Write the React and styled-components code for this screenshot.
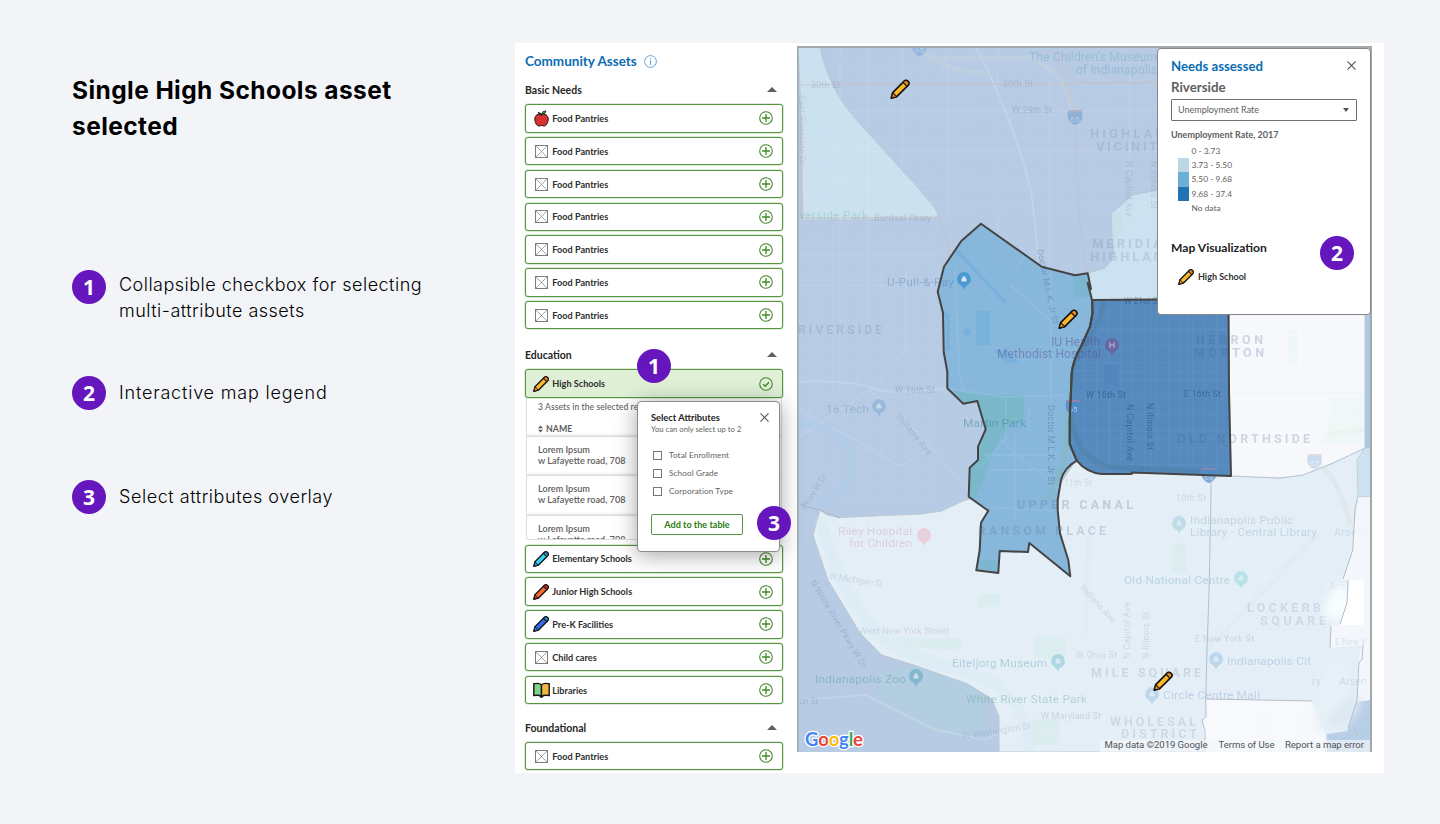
import React from "react";
import styled, { createGlobalStyle } from "styled-components";

const GlobalStyle = createGlobalStyle`
  * { box-sizing: border-box; }
  body { margin: 0; background: #f2f4f8; font-family: Lato, "Open Sans", sans-serif; }
  h1, h2, h3, p, ol, ul { margin: 0; padding: 0; font-weight: inherit; }
  ol, ul { list-style: none; }
  svg { display: block; flex: none; }
`;

const Page = styled.main`
  display: flex;
  width: 1440px;
  height: 824px;
  overflow: hidden;
  background: #f2f4f8;
`;

const Intro = styled.section`
  width: 443px;
  margin-left: 72px;
  padding-top: 72px;
  flex: none;
  font-family: Inter, sans-serif;
  color: #000;
`;

const Title = styled.h1`
  font-size: 24.5px;
  line-height: 36px;
  font-weight: 700;
  letter-spacing: 0.42px;
  width: 360px;
  height: 198px;
`;

const Notes = styled.ol`
  display: flex;
  flex-direction: column;
`;

const Note = styled.li`
  display: flex;
  gap: 13px;
  height: ${(p) => p.$height}px;
  font-size: 18px;
  line-height: 26px;
  font-weight: 300;
  letter-spacing: ${(p) => p.$spacing}px;
  p { padding-top: ${(p) => p.$top}px; width: 330px; }
`;

const Badge = styled.span`
  display: flex;
  align-items: center;
  justify-content: center;
  flex: none;
  width: 34px;
  height: 34px;
  border-radius: 50%;
  background: #6517bd;
  color: #fff;
  font: 700 21px/34px "Open Sans", sans-serif;
  letter-spacing: 0;
`;

const FloatingBadge = styled(Badge)`
  position: absolute;
  left: ${(p) => p.$x}px;
  top: ${(p) => p.$y}px;
  z-index: 3;
`;

const AppPanel = styled.section`
  position: relative;
  display: flex;
  gap: 14px;
  width: 869px;
  height: 730px;
  margin-top: 43px;
  padding: 3px 12px 0 10px;
  background: #fff;
  overflow: hidden;
`;

const Sidebar = styled.aside`
  position: relative;
  width: 258px;
  flex: none;
`;

const SidebarTitle = styled.h2`
  display: flex;
  align-items: center;
  gap: 7px;
  height: 31px;
  padding-bottom: 1px;
  color: #0a6db4;
  font-size: 13.5px;
  font-weight: 700;
  white-space: nowrap;
`;

const GroupHeader = styled.h3`
  display: flex;
  align-items: center;
  justify-content: space-between;
  height: ${(p) => p.$height || 27}px;
  padding: 0 6px 2px 0;
  font-size: 10.5px;
  font-weight: 700;
  color: #262626;
`;

const Caret = styled.i`
  border: 5px solid transparent;
  border-top: 0;
  border-bottom: 5.5px solid #616161;
`;

const AssetList = styled.ul`
  display: flex;
  flex-direction: column;
  gap: 4.5px;
  margin-bottom: ${(p) => p.$after || 0}px;
`;

const AssetRow = styled.li`
  display: flex;
  align-items: center;
  height: 28.3px;
  padding: 0 9px 0 7px;
  border: 1.3px solid #579641;
  border-radius: 3px;
  background: ${(p) => (p.$selected ? "#dff0d7" : "#fff")};
  box-shadow: 0 0 0 0.5px #57964166;
  font-size: 9.15px;
  font-weight: 700;
  color: #2e2e2e;
  span { flex: 1; padding-left: 3px; }
`;

const IconSlot = styled.i`
  display: flex;
  justify-content: center;
  width: 16.3px;
`;

const Details = styled.div`
  height: 142.5px;
  margin: -4.5px 1px 0;
  border: 1px solid #ddd;
  border-top: 0;
  border-radius: 0 0 3px 3px;
  overflow: hidden;
  color: #606060;
  font-size: 9.15px;
  font-weight: 600;
`;

const DetailsSummary = styled.p`
  height: 21px;
  padding: 3px 0 0 11px;
  font-size: 8.5px;
  line-height: 12px;
  letter-spacing: 0.1px;
  font-weight: 500;
  white-space: nowrap;
`;

const DetailsHead = styled.div`
  display: flex;
  align-items: center;
  gap: 3px;
  height: 17px;
  padding: 3px 0 0 11px;
  font-size: 8.8px;
  font-weight: 700;
`;

const DetailsItem = styled.div`
  height: 39.8px;
  padding: 7px 11px 0;
  border-top: 1px solid #dcdcdc;
  box-shadow: 0 -1px 2px rgba(0, 0, 0, 0.12);
  line-height: 11px;
`;

const Popover = styled.div`
  position: absolute;
  left: 122px;
  top: 358px;
  z-index: 2;
  width: 143px;
  height: 151px;
  padding: 9px 10px 0 13px;
  border: 1px solid #8b8b8b;
  border-radius: 4px;
  background: #fff;
  box-shadow: 0 3px 22px rgba(0, 0, 0, 0.36);
  color: #5f5f5f;
`;

const PopoverHead = styled.div`
  display: flex;
  justify-content: space-between;
  align-items: center;
  height: 12px;
  font-size: 9.3px;
  font-weight: 700;
  color: #222;
`;

const Hint = styled.p`
  height: 23px;
  font-size: 7.7px;
  line-height: 12px;
  white-space: nowrap;
`;

const CheckLabel = styled.label`
  display: flex;
  align-items: center;
  gap: 7px;
  height: 18px;
  padding-left: 2px;
  font-size: 8.2px;
  white-space: nowrap;
  letter-spacing: 0.1px;
`;

const Box = styled.i`
  width: 9px;
  height: 9px;
  border: 1px solid #777;
`;

const AddButton = styled.button`
  display: block;
  width: 92px;
  height: 21px;
  margin-top: 14px;
  padding: 0;
  border: 1.3px solid #579641;
  border-radius: 2px;
  background: #fff;
  color: #2c7a10;
  font: 700 9.1px/18px Lato, sans-serif;
`;

const MapFrame = styled.div`
  position: relative;
  width: 575px;
  height: 706px;
  flex: none;
`;

const Legend = styled.aside`
  position: absolute;
  left: 360px;
  top: 2px;
  width: 214px;
  height: 267px;
  padding: 8px 14px 0 13px;
  border: 1px solid #858585;
  border-radius: 4px;
  background: #fff;
  color: #606060;
`;

const LegendHead = styled.div`
  display: flex;
  align-items: center;
  justify-content: space-between;
  height: 17px;
  color: #0a6db4;
  font-size: 13.2px;
  font-weight: 700;
`;

const Region = styled.h3`
  height: 25px;
  font-size: 13.3px;
  line-height: 27px;
  font-weight: 700;
`;

const Select = styled.div`
  display: flex;
  align-items: center;
  justify-content: space-between;
  width: 186px;
  height: 22px;
  padding: 0 7px 1px 6px;
  border: 1px solid #707070;
  border-radius: 1px;
  font-size: 9px;
`;

const SelectArrow = styled.i`
  border: 3.5px solid transparent;
  border-bottom: 0;
  border-top: 4px solid #555;
`;

const ScaleTitle = styled.p`
  margin: 7px 0 3px;
  font-size: 9px;
  line-height: 13px;
  font-weight: 700;
`;

const ScaleRow = styled.div`
  display: flex;
  align-items: center;
  gap: 3px;
  height: 14.2px;
  padding-left: 7px;
  font-size: 8.4px;
`;

const Swatch = styled.i`
  width: 10.5px;
  height: 14.2px;
  background: ${(p) => p.$color};
`;

const VizTitle = styled.h3`
  height: 40px;
  margin-top: 25px;
  font-size: 12.1px;
  line-height: 15px;
  font-weight: 700;
  color: #222;
`;

const VizRow = styled.div`
  display: flex;
  align-items: center;
  gap: 4px;
  height: 16px;
  margin-top: -11px;
  padding-left: 7px;
  font-size: 9px;
  font-weight: 700;
  color: #333;
`;

function PencilShape({ body = "#fbb829", end = "#f08a1d" }) {
  return (
    <g stroke="#151515" strokeWidth="1.35" strokeLinejoin="round">
      <path d="M1 15 2.1 10.7 11 1.8Q12.6.4 14.2 1.8 15.6 3.4 14.2 5L5.3 13.9Z" fill={body} />
      <path d="m10.2 2.6.8-.8q1.6-1.4 3.2 0 1.4 1.6 0 3.2l-.8.8Z" fill={end} strokeWidth="1" />
      <path d="m2.1 10.7 3.2 3.2L1 15Z" fill={end} strokeWidth=".9" />
    </g>
  );
}

function Pencil(props) {
  return (
    <svg width="16" height="16" viewBox=".3 .3 15.2 15.4">
      <PencilShape {...props} />
    </svg>
  );
}

function Apple() {
  return (
    <svg width="15" height="17" viewBox="0 0 15 17">
      <path d="M7.5 5C4.4 3.2.8 5 .8 9c0 3.6 2 7 4.2 7 1 0 1.6-.5 2.5-.5s1.5.5 2.5.5c2.2 0 4.2-3.4 4.2-7 0-4-3.6-5.8-6.7-4Z" fill="#d93030" stroke="#181818" strokeWidth="1" />
      <path d="M7.5 5.5Q7.4 3.3 3.8 2.6" fill="none" stroke="#181818" strokeWidth="1.2" />
      <path d="M7.6 4.2Q8 .9 12 .9 11.6 4.2 7.6 4.2Z" fill="#55a63a" stroke="#181818" strokeWidth=".8" />
    </svg>
  );
}

function Book() {
  return (
    <svg width="17" height="16" viewBox="0 0 17 16">
      <path d="M.8 1.6H2.4Q6 .7 8.5 2.8V14.2Q6 12.7.8 13.5Z" fill="#7ed28b" stroke="#151515" strokeWidth="1.4" />
      <path d="M16.2 1.6H14.6Q11 .7 8.5 2.8V14.2Q11 12.7 16.2 13.5Z" fill="#f4b63e" stroke="#151515" strokeWidth="1.4" />
      <path d="M6.8 14.2 8.5 15.3 10.2 14.2" fill="none" stroke="#151515" strokeWidth="1.4" />
    </svg>
  );
}

function Placeholder() {
  return (
    <svg width="13" height="13" viewBox="0 0 13 13" fill="none" stroke="#7c7c7c">
      <rect x=".5" y=".5" width="12" height="12" />
      <path d="m.5.5 12 12m0-12-12 12" strokeWidth=".7" />
    </svg>
  );
}

function Action({ checked }) {
  return (
    <svg width="14" height="14" viewBox="0 0 14 14" fill="none" stroke="#43892b">
      <circle cx="7" cy="7" r="6.3" strokeWidth="1.1" />
      <path d={checked ? "m4.2 7.3 2 2 3.8-4" : "M7 3v8M3 7h8"} strokeWidth="1.35" />
    </svg>
  );
}

function Close({ size = 8 }) {
  return (
    <svg width={size} height={size} viewBox="0 0 8 8">
      <path d="m.4.4 7.2 7.2m0-7.2L.4 7.6" stroke="#555" strokeWidth="1" />
    </svg>
  );
}

function Asset({ name, icon, selected }) {
  return (
    <AssetRow $selected={selected}>
      <IconSlot>{icon || <Placeholder />}</IconSlot>
      <span>{name}</span>
      <Action checked={selected} />
    </AssetRow>
  );
}

const riverside =
  "M981 223.7 961.3 241 944 266.7 937.7 291.7 943 313 943.7 351.7 947.3 371.7V388.3L963.3 403.7 977.3 401 985.7 429.3 978 446.7V460L969.7 467.7 968.7 496.7 988.3 510.7 981 522.7 979.7 550 976.3 570.3 998.3 573 999.7 551 1028 552 1029.3 543 1070.3 576.3 1068.3 560 1060 533.3 1057.7 510V500L1061 480Q1064 468 1076.7 460.7L1069.7 444V420L1071.7 373Q1073 360 1081.7 345L1090 326.7 1092.5 313 1092 300 1087.7 283 1091 289 1087.7 273.3 1075 275.3 1041.7 266.7Z";
const northside =
  "M1092.3 300 1228.5 299 1229 392.7 1231 476 1131.7 472.5V474H1101.7Q1087 473 1076.7 460.7L1069.7 444V420L1071.7 373Q1073 360 1081.7 345L1090 326.7 1092.5 313Z";
const downtown =
  "M820 510 813 535 828 580 860 633 881.7 655 916.7 666 968 684 991.7 699 999 716.7V752H1372V448H1365L1333 463 1303 475 1280 478 1231 476 1076 460 1050 500 969 499 963 501 941.7 511 921.7 514 840 517.5 827 515Z";

const labels = [
  ["The Children's Museum", 1029, 61, 12, 128, "#3d8fb0", 0.26],
  ["of Indianapolis", 1076, 74, 12, 81, "#3d8fb0", 0.26],
  ["30th St", 811, 88, 8.7, 29, "#66758c", 0.25],
  ["30th St", 1003, 87, 8.7, 30, "#66758c", 0.22],
  ["W 29th St", 1012, 113, 9, 40, "#66758c", 0.28],
  ["HIGHLAND", 1090, 138, 13, 86, "#627c9d", 0.2, 700],
  ["VICINITY", 1096, 151, 13, 72, "#627c9d", 0.2, 700],
  ["MERIDIAN", 1092, 248, 13, 82, "#627c9d", 0.22, 700],
  ["HIGHLAND", 1090, 261, 13, 84, "#627c9d", 0.2, 700],
  ["verside Park", 799, 219, 11.8, 69, "#4ba184", 0.25],
  ["Burdsal Pkwy", 874, 221, 9, 57, "#66758c", 0.25],
  ["U-Pull-&-Pay", 887, 286, 11.8, 67, "#3972a8", 0.35],
  ["RIVERSIDE", 798, 334, 12, 84, "#627c9d", 0.22, 700],
  ["IU Health", 1051, 346, 12, 49, "#52478f", 0.42],
  ["Methodist Hospital", 997, 358, 12, 104, "#52478f", 0.42],
  ["HERRON", 1196, 344, 12.5, 67, "#3a5c89", 0.22, 700],
  ["MORTON", 1194, 357, 12.5, 70, "#3a5c89", 0.22, 700],
  ["W 16th St", 895, 393, 8.9, 40, "#66758c", 0.28],
  ["W 16th St", 1086, 398, 8.9, 40, "#173f76", 0.52],
  ["E 16th St", 1184, 397, 8.9, 37, "#173f76", 0.48],
  ["16 Tech", 826, 413, 11.8, 43, "#4277a7", 0.28],
  ["Martin Park", 963, 427, 11.8, 63, "#237f8d", 0.42],
  ["OLD NORTHSIDE", 1177, 443, 12.5, 133, "#3a5c89", 0.22, 700],
  ["UPPER CANAL", 1017, 509, 12.5, 116, "#516f91", 0.25, 700],
  ["RANSOM PLACE", 978, 535, 12.5, 128, "#516f91", 0.23, 700],
  ["11th St", 1064, 486, 8.7, 28, "#66758c", 0.16],
  ["10th St", 1176, 501, 8.7, 30, "#66758c", 0.2],
  ["Riley Hospital", 838, 535, 11.8, 74, "#bd6b82", 0.24],
  ["for Children", 849, 547, 11.8, 63, "#bd6b82", 0.24],
  ["Indianapolis Public", 1190, 524, 11.8, 103, "#6e9db7", 0.3],
  ["Library - Central Library", 1190, 536, 11.8, 127, "#6e9db7", 0.3],
  ["Arsena", 1334, 536, 11, 35, "#6e9db7", 0.22],
  ["Ars", 1329, 590, 11, 17, "#6e9db7", 0.22],
  ["Old National Centre", 1124, 584, 11.8, 106, "#58a3b1", 0.32],
  ["LOCKERB", 1247, 612, 12.5, 74, "#627c9d", 0.18, 700],
  ["SQUARE", 1260, 625, 12.5, 66, "#627c9d", 0.18, 700],
  ["E New York St", 1195, 642, 8.7, 59, "#66758c", 0.22],
  ["West New York Street", 859, 634, 9, 90, "#66758c", 0.2],
  ["W Ohio St", 1076, 658, 8.7, 41, "#66758c", 0.2],
  ["Eiteljorg Museum", 952, 667, 11.8, 95, "#468fa9", 0.32],
  ["Indianapolis Cit", 1227, 665, 11.8, 84, "#6390bd", 0.3],
  ["MILE SQUARE", 1091, 677, 12.5, 110, "#627c9d", 0.2, 700],
  ["Circle Centre Mall", 1163, 699, 11.8, 97, "#6390bd", 0.3],
  ["Indianapolis Zoo", 815, 683, 11.8, 91, "#32819b", 0.32],
  ["White River State Park", 966, 703, 11.8, 121, "#55a18a", 0.34],
  ["W Maryland St", 1041, 719, 8.9, 60, "#66758c", 0.22],
  ["WHOLESAL", 1110, 726, 12.5, 86, "#627c9d", 0.18, 700],
  ["DISTRICT", 1121, 738, 12.5, 76, "#627c9d", 0.18, 700],
  ["W 21st St", 1124, 304, 8.7, 36, "#173f76", 0.42],
  ["on St", 799, 704, 8.5, 19, "#66758c", 0.25],
];

const edgeLabels = [
  ["E New Y", 1335, 645, 8.5, 31, "#66758c", 0.18],
  ["ry", 1312, 685, 11, 9, "#6e9db7", 0.25],
  ["Arsen", 1339, 685, 11, 28, "#6e9db7", 0.22],
];

const turnedLabels = [
  ["Doctor M.L.K. Jr St", 1037, 250, 78, 76, "#315c83", 0.35],
  ["Doctor M.L.K. Jr St", 1048, 405, 90, 80, "#315c83", 0.38],
  ["N Capitol Ave", 1126, 161, 90, 56, "#66758c", 0.22],
  ["N Illinois St", 1151, 161, 90, 48, "#66758c", 0.22],
  ["N Capitol Ave", 1127, 404, 90, 57, "#173f76", 0.45],
  ["N Illinois St", 1147, 403, 90, 47, "#173f76", 0.45],
  ["Indiana Ave", 896, 416, 51, 51, "#66758c", 0.25],
  ["Indiana Ave", 1080, 588, 48, 48, "#66758c", 0.2],
  ["N Capitol Ave", 1130, 659, -90, 57, "#66758c", 0.2],
  ["N Illinois St", 1149, 659, -90, 47, "#66758c", 0.2],
  ["N White River Pkwy W Dr", 810, 582, 59, 101, "#66758c", 0.28],
  ["W Michigan St", 829, 579, 8, 54, "#66758c", 0.2],
  ["W Washington St", 963, 739, -9, 69, "#66758c", 0.2],
  ["East Riverside Dr", 799, 95, 90, 70, "#66758c", 0.18],
  ["Pkwy W Dr", 806, 510, -58, 40, "#66758c", 0.22],
  ["East St", 1267, 739, -90, 25, "#66758c", 0.15],
  ["ge Ave", 1304, 739, -90, 24, "#66758c", 0.15],
];

const pins = [
  [964, 281, "#4b99d1", 1],
  [1112, 347, "#6b5a9c", 0.75],
  [879, 408, "#7ca8d0", 0.5],
  [924, 537, "#ecb2bd", 0.5],
  [1179, 525, "#a6cfdf", 0.6],
  [1241, 580, "#9bdbe0", 0.6],
  [1058, 663, "#8bc9d8", 0.6],
  [1216, 661, "#a9cde9", 0.65],
  [1152, 696, "#a9cde9", 0.65],
  [916, 678, "#69acc6", 0.65],
];

const shields = [
  [919.5, 49, "65", 0.35],
  [1075, 118, "65", 0.4],
  [1073, 408, "65", 0.9],
  [1209, 476, "65", 0.7],
  [1314.5, 462, "65", 0.25],
];

function MapLabel({ label }) {
  const [text, x, y, size, width, color, opacity, weight] = label;
  return (
    <text x={x} y={y} fontSize={size} fill={color} opacity={opacity} fontWeight={weight || 400} textLength={width}>{text}</text>
  );
}

function MapDrawing() {
  return (
    <svg width="575" height="706" viewBox="797 46 575 706">
      <defs>
        <pattern id="blocks" width="34" height="22" patternUnits="userSpaceOnUse">
          <path d="M0 5H34M7 0V22M24 0V13M0 15H24" fill="none" stroke="#fff" strokeWidth=".7" />
        </pattern>
        <pattern id="fineBlocks" width="12" height="17" patternUnits="userSpaceOnUse">
          <path d="M0 6H12M5 0V17" fill="none" stroke="#fff" strokeWidth=".6" />
        </pattern>
        <filter id="haze" x="-50%" y="-50%" width="200%" height="200%">
          <feGaussianBlur stdDeviation="5" />
        </filter>
        <clipPath id="riversideClip"><path d={riverside} /></clipPath>
        <clipPath id="northsideClip"><path d={northside} /></clipPath>
      </defs>
      <rect x="797" y="46" width="575" height="706" fill="#b7cbe4" />
      <path d="M798 46H820L822 57 827 72 836 92 845 106 860 124 890 157 918 188 935 208 939 218 803 220 801 110Z" fill="#cce1ef" stroke="#bcc5cf" strokeWidth=".8" />
      <path d="M1372 180 1158 190 1133 195 1111 214 1114 257 1105 268 1088 273 1092 300H1372Z" fill="#cde2f0" stroke="#b5c3d2" strokeWidth=".8" />
      <path d="M1112 212h10l-1 20q-4 7-9 8Z" fill="#c5e1e5" opacity=".6" />
      <path d={downtown} fill="#e4eef6" stroke="#bdc6ce" strokeWidth=".9" />
      <path d="M1228 300H1365V448L1333 463 1303 475 1280 478 1231 476Z" fill="#f6f8fc" stroke="#b9c6d1" />
      <path d="M1365 448H1371V497H1358L1357 460Z" fill="#cde2f0" stroke="#b9c6d1" strokeWidth=".8" />
      <path d="M797 503 812 508 820 510 840 518" fill="none" stroke="#abb7c4" />
      <path d="M875 683Q880 672 895 668L916.7 666 968 684 985 696V733Q940 742 910 719L875 700Z" fill="#b0cee0" opacity=".7" />
      <path d="M798 424Q850 420 850 470 850 490 820 505" fill="none" stroke="#a9cbea" strokeWidth="11" opacity=".35" />
      <path d="M820 517Q843 610 895 647 935 665 985 678 1030 705 1030 752" fill="none" stroke="#d2e9f5" strokeWidth="12" opacity=".3" />

      <g fill="none" stroke="#e6eef7" opacity=".24">
        <path d="M975 46Q1005 100 1027 175T1048 752" strokeWidth="2" />
        <path d="M797 382Q850 380 872 388T947 388L1230 393H1370" strokeWidth="2" />
        <path d="M798 438 870 390 906 350V270M870 390 920 435 968 490M797 409 850 437 900 466 930 448" />
        <path d="M797 700 865 695 933 729 985 740 1090 690M1041 554 1100 618 1210 699" strokeWidth="2" />
        <path d="M860 587 1100 591 1370 599M880 633 1090 636 1360 640M1050 460V752M1102 500V752M1145 460V752M1250 500V730" />
        <path d="M840 46V390M868 46V320M902 46V165M947 55V220M998 46V230M1050 56V270M1130 46V180M797 111H1158M810 151H1158M820 184H1158M797 254H942M797 285H940M797 350H944" strokeWidth=".8" />
      </g>
      <rect x="830" y="54" width="328" height="160" fill="url(#blocks)" opacity=".08" />
      <rect x="798" y="230" width="142" height="275" fill="url(#fineBlocks)" opacity=".07" />
      <rect x="1000" y="478" width="350" height="255" fill="url(#blocks)" opacity=".17" />
      <rect x="1230" y="316" width="134" height="145" fill="url(#blocks)" opacity=".5" />
      <path d="M797 85 1158 83M1045 52H1058L1060 68 1078 82H1158M801 112V218L939 217 948 242 949 263M1060 80Q1076 92 1076 145L1079 215 1084 255 1088 275" fill="none" stroke="#c6bfc5" strokeWidth="1.2" opacity=".7" />
      <path d="M920 48Q944 72 985 73M930 58H1030Q1071 74 1073 120M1328 435Q1360 427 1370 433M1320 465Q1340 480 1350 525" fill="none" stroke="#d1dbd5" strokeWidth="5" opacity=".25" />
      <path d="M979 594H1000V607H979ZM1034 636H1065V658H1034ZM1172 543H1187V573H1172ZM890 637 961 638V651L907 647ZM1032 719H1060V745H1032Z" fill="#d7edeb" opacity=".6" />
      <path d="M1288 330h10v35h-10ZM1330 397h34v48h-49q18-14 15-48Z" fill="#edf6f4" opacity=".6" />
      <path d="M1089 535 1086 590V634M1205 651 1320 533" fill="none" stroke="#d3e9f3" strokeWidth="4" opacity=".35" />

      <path d={riverside} fill="#88b7dc" />
      <g clipPath="url(#riversideClip)">
        <path d="M955 391 985 395H1024V420Q1010 422 1000 440 990 455 984 480L974 500 967 490 969 467 985 429 977 401 964 404Z" fill="#75b9c0" opacity=".65" />
        <path d="M978 560H999V574H976ZM1073 275h16v22h-16Z" fill="#6fb6c5" opacity=".5" />
        <path d="M955 249 1006 303M942 312 948 316V350" fill="none" stroke="#66a9d8" strokeWidth="3" opacity=".5" />
        <path d="M976 311h14v34h-14ZM993 350h14l12 13h-12ZM964 329a3 3 0 1 1 6 5 3 3 0 0 1-6-5Z" fill="#70aeda" opacity=".65" />
        <path d="M944 388 1004 397 1075 395M1006 397V439L980 467M1051 265V460M1010 285 1050 320M955 268 959 370 964 392M1000 440 1060 490 1080 480M981 507 1075 511M984 455H1048M988 470H1050M1029 405V435M1015 435V520" fill="none" stroke="#9bc8e6" strokeWidth="1.8" opacity=".35" />
        <path d="M1072 376 1064 460 1048 500" fill="none" stroke="#83b8b7" strokeWidth="6" opacity=".4" />
        <path d="M1003 258q15-22 20 0l-8 13" fill="none" stroke="#9bc8e6" opacity=".6" />
      </g>
      <path d={northside} fill="#568abf" />
      <g clipPath="url(#northsideClip)">
        <rect x="1070" y="300" width="160" height="177" fill="url(#fineBlocks)" opacity=".07" />
        <path d="M1070 394H1231M1110 395V475M1151 300V476M1188 300V476M1216 300V476M1110 438H1230M1080 330H1231M1070 370 1160 373 1231 371" fill="none" stroke="#78a5d0" opacity=".22" />
        <path d="M1104 302Q1101 326 1077 357 1068 380 1072 424 1082 462 1110 467L1200 471" fill="none" stroke="#477ea4" strokeWidth="5" opacity=".45" />
        <path d="M1105 306Q1100 328 1079 357 1070 382 1074 427 1085 464 1110 469" fill="none" stroke="#6992a6" strokeWidth="1" opacity=".5" />
        <path d="M1104 365h14v20h-14Z" fill="#487fb9" opacity=".35" />
      </g>

      <g fontFamily="Roboto, sans-serif">
        {labels.map((label, i) => <MapLabel key={i} label={label} />)}
        {turnedLabels.map(([text, x, y, angle, width, color, opacity], i) => (
          <text key={i} transform={`translate(${x} ${y}) rotate(${angle})`} fontSize="8.8" fill={color} opacity={opacity} textLength={width}>{text}</text>
        ))}
      </g>
      {pins.map(([x, y, color, opacity], i) => (
        <g key={i} transform={`translate(${x} ${y})`} opacity={opacity}>
          <path d="M0 9Q-1 5-5 3A7 7 0 1 1 5 3Q1 5 0 9Z" fill={color} />
          {i === 1 || i === 3 ? (
            <path d="M-2-5V1M2-5V1M-2-2H2" stroke="#d8bfd8" strokeWidth="1.2" />
          ) : (
            <path d="M-2.5-2.5h5v3h-5Zm1-2h3v2h-3Z" fill="#d7e8f3" />
          )}
        </g>
      ))}
      {shields.map(([x, y, text, opacity], i) => (
        <g key={i} transform={`translate(${x} ${y})`} opacity={opacity}>
          <path d="M-7-6H7Q9 4 0 7-9 4-7-6Z" fill="#4f8cca" />
          <path d="M-7-7H7" stroke="#9a83ae" strokeWidth="2" />
          <text y="3.5" fill="#b5cde9" fontSize="8" fontFamily="Roboto, sans-serif" textAnchor="middle">{text}</text>
        </g>
      ))}

      <g fill="none" stroke="#444" strokeWidth="2" strokeLinejoin="round">
        <path d={riverside} />
        <path d={northside} />
      </g>
      <path d="M1365 315H1371V448H1365Z" fill="#b1c8e4" />

      <path d="M1206 699 1265 700 1312 701 1325 733V752H1206L1202 721 1206 717Z" fill="#f8fafd" opacity=".9" />
      <path d="M1358 497H1371V708L1357 704 1358 662 1362 645 1330 648V626L1340 624 1347 603 1348 580H1343L1352 550Z" fill="#f6f8fc" opacity=".85" />
      <g filter="url(#haze)">
        <path d="M1334 586 1350 584V620H1332L1322 614Z" fill="#f8fdff" />
        <path d="M1324 665 1332 660 1348 670 1345 727 1316 730V698Z" fill="#e7f1f8" />
      </g>
      <path d="M1350 580H1364V625H1340L1347 603Z" fill="#fff" />
      <path d="M1357 702 1371 700V752H1327V734L1347 731Z" fill="#b7cee7" />
      <path d="M1345 700 1362 695 1358 712 1345 728 1322 726Z" fill="#dce8f3" filter="url(#haze)" />
      <g fontFamily="Roboto, sans-serif">
        {edgeLabels.map((label, i) => <MapLabel key={i} label={label} />)}
      </g>
      <path d="M1211 477V495L1209 593 1207 650 1205.7 699 1206 717 1202 720 1205 731V750M1206 699 1312 701M1358 497 1355 509 1352.7 550 1343 579M1348 580 1347 603 1340 624M1331 626 1330 648M1363 645 1362 660 1359 662 1357 700 1348 728M1354 729 1358 736" fill="none" stroke="#b4bfc7" />

      <path d="M797.5 752V47H1371V752" fill="none" stroke="#a1a8a7" strokeWidth="2" />
      <rect x="1100" y="740" width="270" height="12" fill="#f5f7fb" opacity=".65" />
      <g fontFamily="Roboto, sans-serif" fontSize="9.6" fill="#505459">
        <text x="1104.5" y="748" textLength="103">Map data ©2019 Google</text>
        <text x="1218.5" y="748" textLength="56">Terms of Use</text>
        <text x="1285" y="748" textLength="79">Report a map error</text>
      </g>
      <text x="805" y="745.5" fontFamily="Lato, sans-serif" fontSize="18.5" textLength="58" fontWeight="700" stroke="#fff" strokeWidth="2.5" paintOrder="stroke">
        <tspan fill="#4285f4">G</tspan><tspan fill="#ea4335">o</tspan><tspan fill="#fbbc05">o</tspan><tspan fill="#4285f4">g</tspan><tspan fill="#34a853">l</tspan><tspan fill="#ea4335">e</tspan>
      </text>
      {[[890, 79], [1058, 309], [1153, 671]].map(([x, y]) => (
        <g key={x} transform={`translate(${x} ${y}) scale(1.27)`}><PencilShape /></g>
      ))}
    </svg>
  );
}

export default function App() {
  return (
    <Page>
      <GlobalStyle />
      <Intro>
        <Title>Single High Schools asset selected</Title>
        <Notes>
          <Note $height={106} $top={2} $spacing={0.48}><Badge>1</Badge><p>Collapsible checkbox for selecting multi-attribute assets</p></Note>
          <Note $height={104} $top={4} $spacing={0.8}><Badge>2</Badge><p>Interactive map legend</p></Note>
          <Note $height={40} $top={4} $spacing={0.55}><Badge>3</Badge><p>Select attributes overlay</p></Note>
        </Notes>
      </Intro>
      <AppPanel>
        <Sidebar>
          <SidebarTitle>
            Community Assets
            <svg width="13" height="13" viewBox="0 0 13 13" fill="none" stroke="#559acb">
              <circle cx="6.5" cy="6.5" r="5.9" strokeWidth=".9" /><path d="M6.5 5.3v4.5M6.5 3v1.2" />
            </svg>
          </SidebarTitle>
          <GroupHeader $height={27.3}>Basic Needs<Caret /></GroupHeader>
          <AssetList $after={13}>
            <Asset name="Food Pantries" icon={<Apple />} />
            {[1, 2, 3, 4, 5, 6].map((n) => <Asset key={n} name="Food Pantries" />)}
          </AssetList>
          <GroupHeader $height={27}>Education<Caret /></GroupHeader>
          <AssetList $after={11}>
            <Asset name="High Schools" icon={<Pencil />} selected />
            <Details>
              <DetailsSummary>3 Assets in the selected region</DetailsSummary>
              <DetailsHead>
                <svg width="5" height="8" viewBox="0 0 5 8" fill="#555"><path d="M0 3.3 2.5.5 5 3.3ZM0 4.7 2.5 7.5 5 4.7Z" /></svg>
                NAME
              </DetailsHead>
              {[1, 2, 3].map((n) => <DetailsItem key={n}>Lorem Ipsum<br />w Lafayette road, 708</DetailsItem>)}
            </Details>
            <Asset name="Elementary Schools" icon={<Pencil body="#35d5f3" end="#2895dc" />} />
            <Asset name="Junior High Schools" icon={<Pencil body="#ff6930" end="#dd2526" />} />
            <Asset name="Pre-K Facilities" icon={<Pencil body="#346df4" end="#2689df" />} />
            <Asset name="Child cares" />
            <Asset name="Libraries" icon={<Book />} />
          </AssetList>
          <GroupHeader>Foundational<Caret /></GroupHeader>
          <AssetList><Asset name="Food Pantries" /></AssetList>
        </Sidebar>
        <MapFrame>
          <MapDrawing />
          <Legend>
            <LegendHead>Needs assessed<Close size={9} /></LegendHead>
            <Region>Riverside</Region>
            <Select>Unemployment Rate<SelectArrow /></Select>
            <ScaleTitle>Unemployment Rate, 2017</ScaleTitle>
            <ScaleRow><Swatch $color="transparent" />0 - 3.73</ScaleRow>
            <ScaleRow><Swatch $color="#bdd7e7" />3.73 - 5.50</ScaleRow>
            <ScaleRow><Swatch $color="#6baed6" />5.50 - 9.68</ScaleRow>
            <ScaleRow><Swatch $color="#2171b5" />9.68 - 37.4</ScaleRow>
            <ScaleRow><Swatch $color="transparent" />No data</ScaleRow>
            <VizTitle>Map Visualization</VizTitle>
            <VizRow><Pencil />High School</VizRow>
          </Legend>
        </MapFrame>
        <Popover>
          <PopoverHead>Select Attributes<Close size={9} /></PopoverHead>
          <Hint>You can only select up to 2</Hint>
          <CheckLabel><Box />Total Enrollment</CheckLabel>
          <CheckLabel><Box />School Grade</CheckLabel>
          <CheckLabel><Box />Corporation Type</CheckLabel>
          <AddButton>Add to the table</AddButton>
        </Popover>
        <FloatingBadge $x={122} $y={306}>1</FloatingBadge>
        <FloatingBadge $x={805} $y={193}>2</FloatingBadge>
        <FloatingBadge $x={242} $y={463}>3</FloatingBadge>
      </AppPanel>
    </Page>
  );
}
